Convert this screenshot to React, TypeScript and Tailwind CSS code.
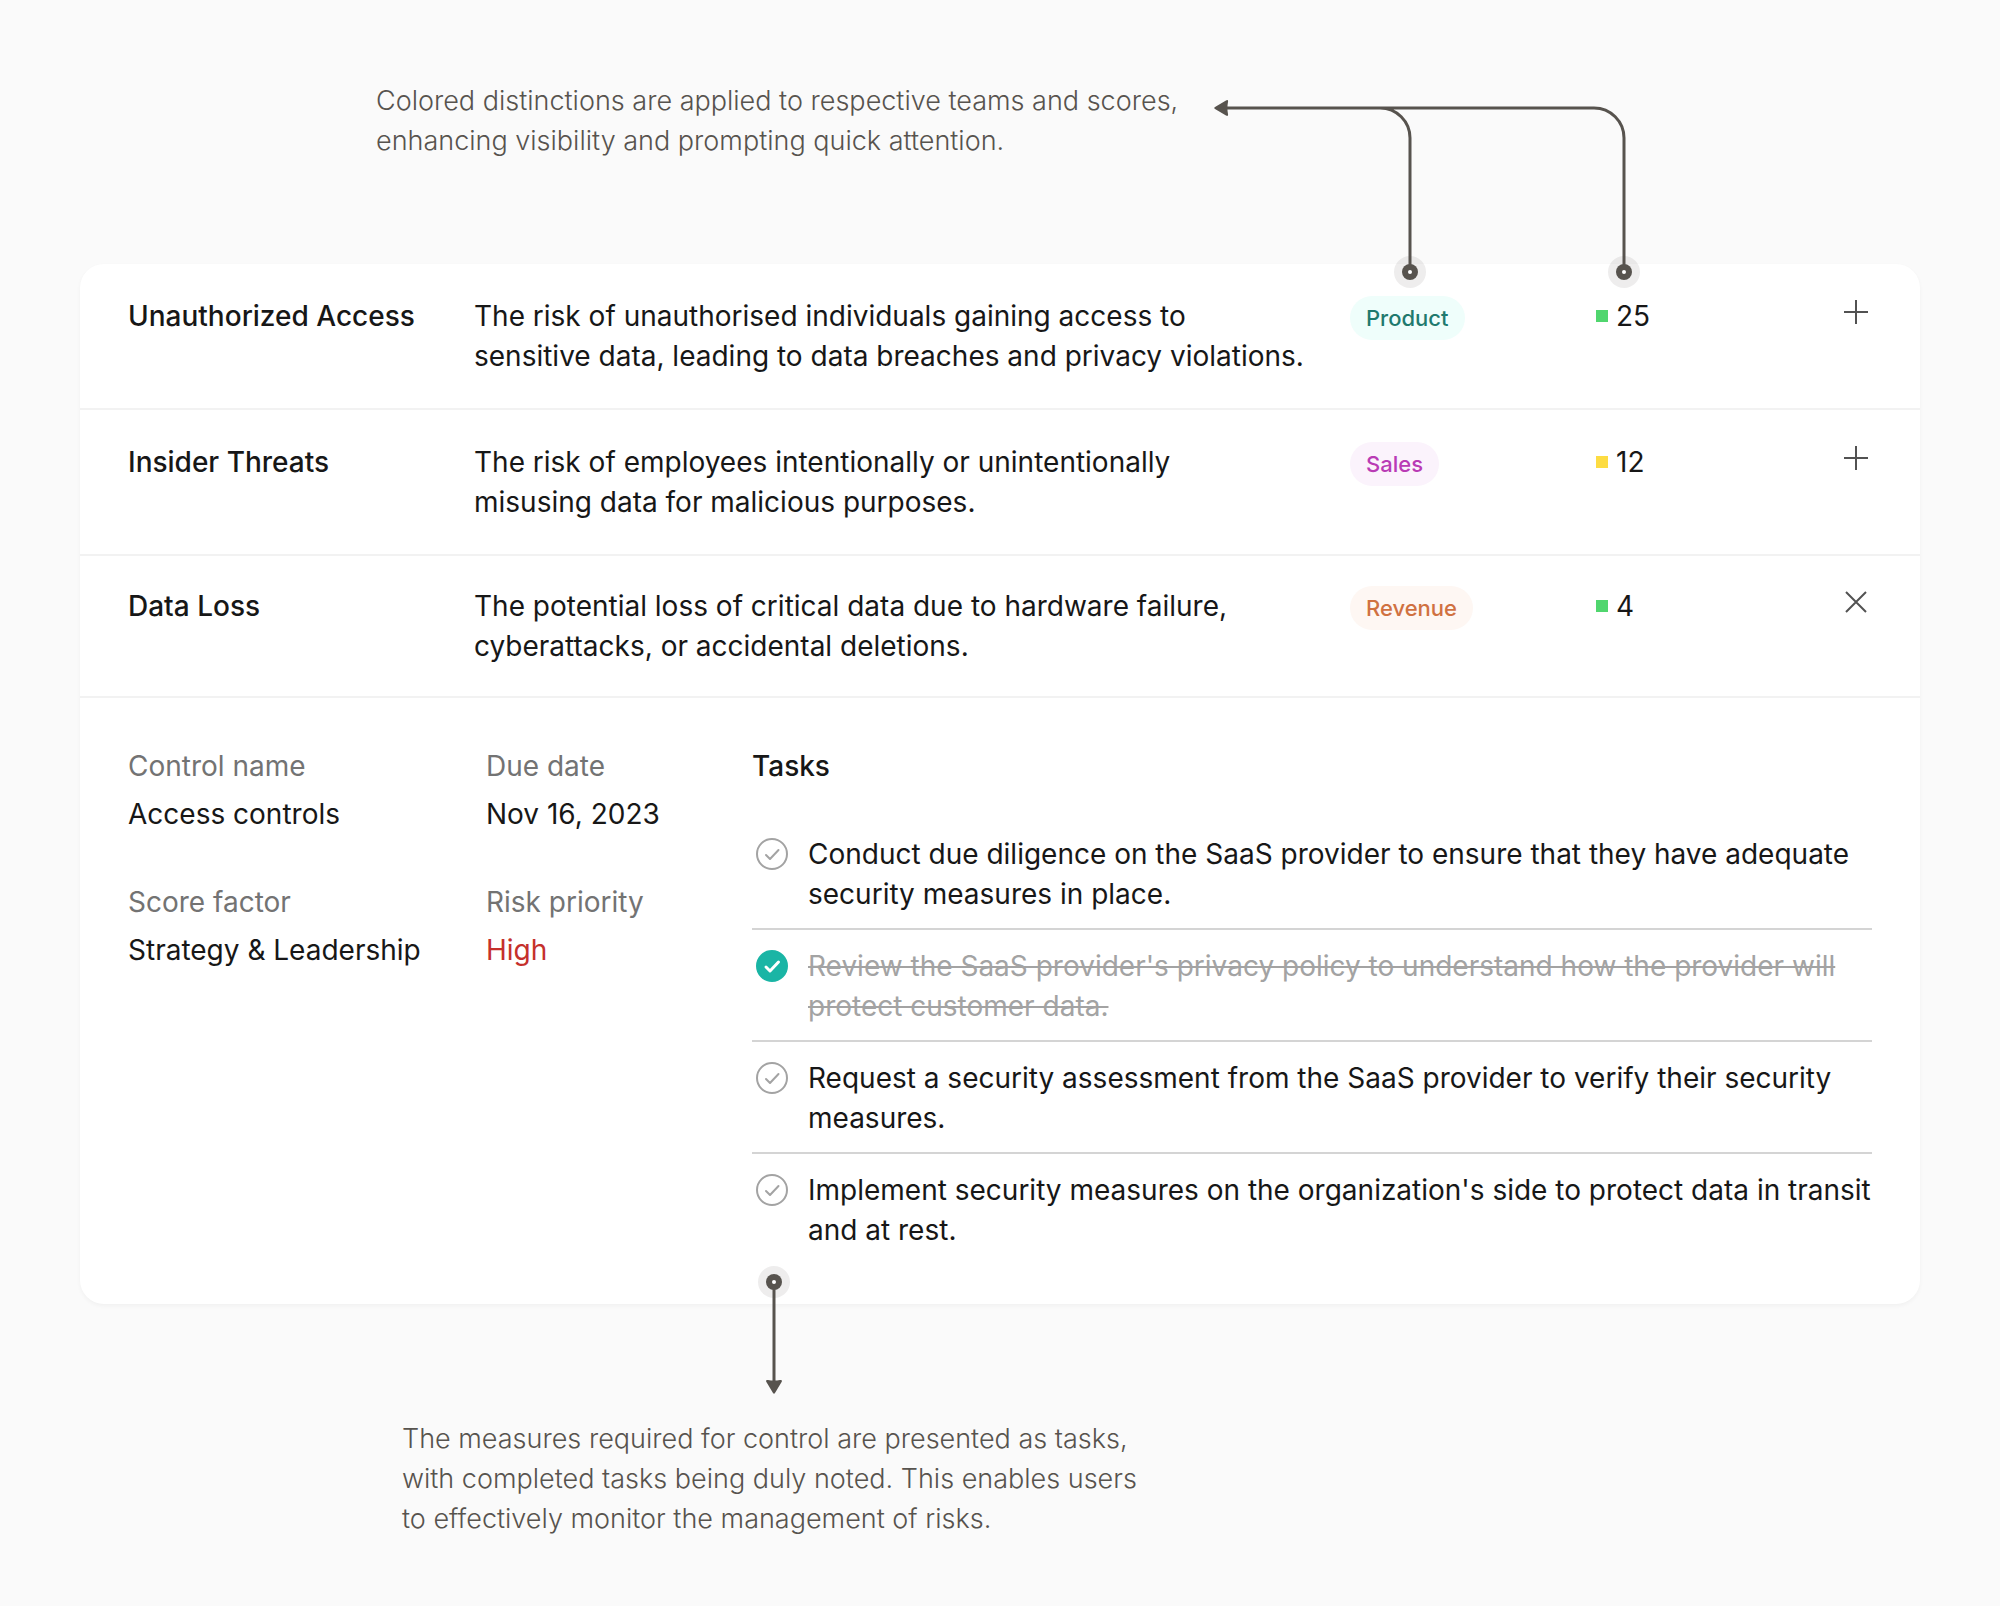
import React, { useState } from 'react';
import clsx from 'clsx';

type Risk = {
  id: string;
  name: string;
  description: string;
  team: string;
  teamClass: string;
  score: number;
  scoreClass: string;
};

type Task = {
  id: string;
  label: string;
  done: boolean;
};

const risks: Risk[] = [
  {
    id: 'unauthorized-access',
    name: 'Unauthorized Access',
    description:
      'The risk of unauthorised individuals gaining access to\nsensitive data, leading to data breaches and privacy violations.',
    team: 'Product',
    teamClass: 'bg-[#effefb] text-[#1f7a6e]',
    score: 25,
    scoreClass: 'bg-[#50d66e]',
  },
  {
    id: 'insider-threats',
    name: 'Insider Threats',
    description:
      'The risk of employees intentionally or unintentionally\nmisusing data for malicious purposes.',
    team: 'Sales',
    teamClass: 'bg-[#fbf3fc] text-[#b93bb5]',
    score: 12,
    scoreClass: 'bg-[#fddc42]',
  },
  {
    id: 'data-loss',
    name: 'Data Loss',
    description:
      'The potential loss of critical data due to hardware failure,\ncyberattacks, or accidental deletions.',
    team: 'Revenue',
    teamClass: 'bg-[#fef7f3] text-[#d07141]',
    score: 4,
    scoreClass: 'bg-[#50d66e]',
  },
];

const details = [
  { label: 'Control name', value: 'Access controls' },
  { label: 'Due date', value: 'Nov 16, 2023' },
  { label: 'Score factor', value: 'Strategy & Leadership' },
  { label: 'Risk priority', value: 'High', valueClass: 'text-[#c5302c]' },
];

const initialTasks: Task[] = [
  {
    id: 'due-diligence',
    label:
      'Conduct due diligence on the SaaS provider to ensure that they have adequate security measures in place.',
    done: false,
  },
  {
    id: 'privacy-policy',
    label:
      "Review the SaaS provider's privacy policy to understand how the provider will protect customer data.",
    done: true,
  },
  {
    id: 'security-assessment',
    label:
      'Request a security assessment from the SaaS provider to verify their security measures.',
    done: false,
  },
  {
    id: 'security-measures',
    label:
      "Implement security measures on the organization's side to protect data in transit and at rest.",
    done: false,
  },
];

const Pin: React.FC<{ cx: number; cy: number }> = ({ cx, cy }) => (
  <>
    <circle cx={cx} cy={cy} r="16" fill="#57534e" fillOpacity="0.1" />
    <circle cx={cx} cy={cy} r="8" fill="#57534e" />
    <circle cx={cx} cy={cy} r="2" fill="#ffffff" />
  </>
);

const TopConnector = () => (
  <svg
    className="absolute top-[92px] right-[360px] z-10"
    width="426"
    height="196"
    viewBox="0 0 426 196"
    fill="none"
    aria-hidden="true"
  >
    <Pin cx={196} cy={180} />
    <Pin cx={410} cy={180} />
    <path
      d="M12 16H380a30 30 0 0 1 30 30V174M166 16a30 30 0 0 1 30 30V174"
      stroke="#57534e"
      strokeWidth="3"
    />
    <path
      d="M1 15 12 8.4Q14.5 7.2 14 10 12.8 16 14 22 14.5 24.800 12 23.600L1 17Q-.5 16 1 15Z"
      fill="#57534e"
    />
  </svg>
);

const BottomConnector = () => (
  <svg
    className="absolute -bottom-[92px] left-[678px]"
    width="32"
    height="130"
    viewBox="0 0 32 130"
    fill="none"
    aria-hidden="true"
  >
    <Pin cx={16} cy={16} />
    <path d="M16 22V116" stroke="#57534e" strokeWidth="3" />
    <path
      d="M15 127 8.400 116Q7.200 113.500 10 114 16 115.200 22 114 24.800 113.500 23.600 116L17 127Q16 128.500 15 127Z"
      fill="#57534e"
    />
  </svg>
);

const TaskItem: React.FC<{ task: Task; onToggle: () => void }> = ({
  task,
  onToggle,
}) => (
  <li className="flex gap-5 border-b-2 border-[#d4d4d4] pt-4 pb-[14px] last:border-b-0 last:pb-0">
    <div className="mt-1 ml-1 grid size-8 shrink-0">
      <input
        id={task.id}
        type="checkbox"
        checked={task.done}
        onChange={onToggle}
        className="col-start-1 row-start-1 size-8 appearance-none rounded-full border-2 border-[#a3a3a3] checked:border-[#1ab5a5] checked:bg-[#1ab5a5]"
      />
      <svg
        className={clsx(
          'pointer-events-none col-start-1 row-start-1 size-8',
          task.done ? 'text-white' : 'text-[#a3a3a3]',
        )}
        viewBox="0 0 32 32"
        fill="none"
        stroke="currentColor"
        strokeWidth={task.done ? 3 : 2}
        strokeLinecap="round"
        strokeLinejoin="round"
        aria-hidden="true"
      >
        <path d="m10 17 4 4 8.500-9" />
      </svg>
    </div>
    <label
      htmlFor={task.id}
      className={clsx(
        'min-w-0 flex-1',
        task.done && 'text-[#a3a3a3] line-through',
      )}
    >
      {task.label}
    </label>
  </li>
);

const RiskDetails = () => {
  const [tasks, setTasks] = useState<Task[]>(initialTasks);

  const toggleTask = (id: string) => {
    setTasks(
      tasks.map((task) =>
        task.id === id ? { ...task, done: !task.done } : task,
      ),
    );
  };

  return (
    <div className="flex px-12 pt-12 pb-[54px]">
      <dl className="grid w-[624px] shrink-0 grid-cols-[358px_1fr] content-start gap-y-12">
        {details.map(({ label, value, valueClass }) => (
          <div key={label}>
            <dt className="mb-2 text-[#737373]">{label}</dt>
            <dd className={valueClass}>{value}</dd>
          </div>
        ))}
      </dl>
      <section className="min-w-0 flex-1">
        <h3 className="mb-8 font-medium">Tasks</h3>
        <ul>
          {tasks.map((task) => (
            <TaskItem
              key={task.id}
              task={task}
              onToggle={() => toggleTask(task.id)}
            />
          ))}
        </ul>
      </section>
    </div>
  );
};

const App: React.FC = () => {
  const [openId, setOpenId] = useState('data-loss');

  return (
    <main className="min-h-screen bg-[#fafafa] font-['Inter',sans-serif] text-[28px] leading-10 text-[#171717]">
      <header className="relative pt-[81px] pb-[103px] pl-[376px] text-[27px] leading-10 font-light text-[#57534e]">
        <p className="whitespace-pre-line">
          {
            'Colored distinctions are applied to respective teams and scores,\nenhancing visibility and prompting quick attention.'
          }
        </p>
        <TopConnector />
      </header>

      <div className="relative mx-20 rounded-3xl bg-white shadow-[0_2px_4px_rgba(0,0,0,0.04)]">
        {risks.map((risk) => {
          const isOpen = risk.id === openId;

          return (
            <article key={risk.id}>
              <div
                className={clsx(
                  'grid grid-cols-[346px_minmax(0,1fr)_246px_244px_32px] items-start border-b-2 border-[#f2f2f2] px-12',
                  isOpen ? 'py-[30px]' : 'py-8',
                )}
              >
                <h2 className="font-medium">{risk.name}</h2>
                <p className="whitespace-pre-line">{risk.description}</p>
                <span
                  className={clsx(
                    'justify-self-start rounded-full px-4 text-[22px] leading-[44px] font-medium',
                    risk.teamClass,
                  )}
                >
                  {risk.team}
                </span>
                <div className="flex items-center gap-2">
                  <span className={clsx('size-3', risk.scoreClass)} />
                  {risk.score}
                </div>
                <button
                  type="button"
                  aria-expanded={isOpen}
                  aria-label={isOpen ? 'Collapse' : 'Expand'}
                  onClick={() => setOpenId(isOpen ? '' : risk.id)}
                  className="size-8 text-[#525252]"
                >
                  <svg
                    viewBox="0 0 32 32"
                    stroke="currentColor"
                    strokeWidth="2"
                    aria-hidden="true"
                  >
                    <path
                      d={
                        isOpen ? 'M6 6 26 26M26 6 6 26' : 'M16 4V28M4 16H28'
                      }
                    />
                  </svg>
                </button>
              </div>
              {isOpen && <RiskDetails />}
            </article>
          );
        })}
        <BottomConnector />
      </div>

      <footer className="pt-[115px] pb-[67px] pl-[402px] text-[27px] leading-10 font-light text-[#57534e]">
        <p className="whitespace-pre-line">
          {
            'The measures required for control are presented as tasks,\nwith completed tasks being duly noted. This enables users\nto effectively monitor the management of risks.'
          }
        </p>
      </footer>
    </main>
  );
};

export default App;
